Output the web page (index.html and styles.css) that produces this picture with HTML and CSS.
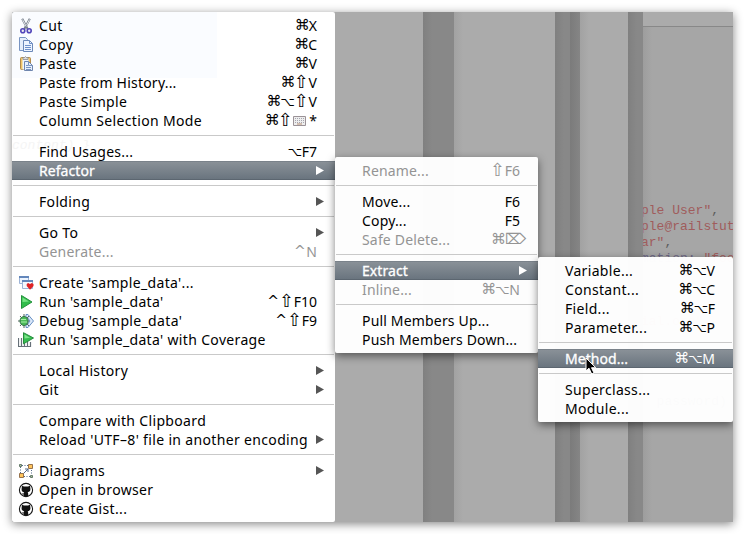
FILE: index.html
```html
<!DOCTYPE html>
<html lang="en">
<head>
<meta charset="utf-8">
<title>Editor context menu</title>
<link rel="stylesheet" href="styles.css">
</head>
<body>
<svg class="defs" width="0" height="0" aria-hidden="true">
  <symbol id="play" viewBox="0 0 16 16"><path d="M3.5 1.5 14 8 3.5 14.5Z" fill="#32bd4c" stroke="#23923c"/><path d="M4.5 3.5 11 7.6 4.5 8Z" fill="#78e486"/></symbol>
  <symbol id="cat" viewBox="0 0 16 16"><circle cx="8" cy="8" r="6.6" fill="#fff" stroke="#161616" stroke-width="1.1"/><path d="M4 3.7 6 4.6h4l2-.9.4 3.1c.2 2.1-.9 3.2-2.7 3.5l.5 1.1V14.4H5.8V12.6C4.5 12.7 4 12.2 3.6 11.2l1.7.6.9-1.5C4.3 10 3.4 9 3.6 6.8Z" fill="#111"/></symbol>
</svg>
<main class="window">
  <div class="panes" aria-hidden="true">
    <i class="pane light first"></i><i class="pane dark wide"></i><i class="pane light second"></i><i class="pane dark narrow"></i><i class="pane darker"></i><i class="pane light third"></i><i class="pane dark narrow"></i>
    <div class="code">
      <pre class="literals"><span>ple User"</span><b>,</b>
<span>ple@railstut</span>
<span>ar"</span><b>,</b>
<em>mation: </em><span>"foo</span>



<span>ial.org"</span>




<b>  password)</b></pre>
    </div>
  </div>

  <nav class="menu main-menu">
    <pre class="ghost">content) }</pre>
    <div class="row"><svg class="icon" viewBox="0 0 16 16"><path d="M4.2.8 9.7 11M11.8.8 6.3 11" stroke="#78818d" stroke-width="2.1" fill="none"/><path d="m4.5 1.5 3.7 7M11.5 1.5 8.7 7" stroke="#fff" stroke-width=".8"/><circle cx="4.8" cy="12.7" r="2" fill="#eee" stroke="#5145ba" stroke-width="1.6"/><circle cx="11.2" cy="12.7" r="2" fill="#eee" stroke="#5145ba" stroke-width="1.6"/></svg><span class="label">Cut</span><kbd><i>⌘</i>X</kbd></div>
    <div class="row"><svg class="icon" viewBox="0 0 16 16"><path d="M1.5.5h6l2 2v11h-8Z" fill="#e5eefb" stroke="#7894c2"/><path d="M5.5 3.5h6l3 3v8h-9Z" fill="#edf4ff" stroke="#6c89b9"/><path d="M11.5 3.5v3h3M7 8.5h6m-6 2h6m-6 2h6" stroke="#6f91ca" fill="none"/></svg><span class="label">Copy</span><kbd><i>⌘</i>C</kbd></div>
    <div class="row"><svg class="icon" viewBox="0 0 16 16"><rect x="2.5" y="1.5" width="10" height="12" rx="1" fill="#f2c566" stroke="#b28b4d"/><path d="M4.5 2.5h6v11h-6Z" fill="#eef4fd"/><path d="M5 3.5v-2h1.5l1-1 1 1H10v2Z" fill="#ddd" stroke="#8a8b90" stroke-width=".8"/><path d="M6.5 5.5h4l4 4v5h-8Z" fill="#e8f0fc" stroke="#6f86ae"/><path d="M10.5 5.5v4h4M8 11.5h5m-5-2h2m-2 4h5" stroke="#7893c0" fill="none"/></svg><span class="label">Paste</span><kbd><i>⌘</i>V</kbd></div>
    <div class="row"><span class="label tight">Paste from History...</span><kbd><i>⌘</i><i class="shift">⇧</i>V</kbd></div>
    <div class="row"><span class="label">Paste Simple</span><kbd><i>⌘</i><i class="option">⌥</i><i class="shift">⇧</i>V</kbd></div>
    <div class="row"><span class="label">Column Selection Mode</span><kbd><i>⌘</i><i class="shift">⇧</i><svg class="keyboard" viewBox="0 0 13 10"><path d="M.5.5h12v9H.5Z" fill="#eee" stroke="#9b9297"/><path d="M2 2.5h9m-9 2h9m-9 2h9" stroke="#a5a5af" stroke-dasharray="1 1"/><path d="M4 8h5" stroke="#b58d72"/></svg> *</kbd></div>
    <hr>
    <div class="row"><span class="label tight">Find Usages...</span><kbd><i class="option">⌥</i>F7</kbd></div>
    <div class="row selected"><span class="label">Refactor</span><span class="arrow"></span></div>
    <hr>
    <div class="row"><span class="label">Folding</span><span class="arrow"></span></div>
    <hr>
    <div class="row"><span class="label">Go To</span><span class="arrow"></span></div>
    <div class="row disabled"><span class="label tight">Generate...</span><kbd><i class="control">^</i>N</kbd></div>
    <hr>
    <div class="row"><svg class="icon" viewBox="0 0 16 16"><path d="M1.5 1.5h9v7h-9Z" fill="#edf5ff" stroke="#9db3d6"/><path d="M1 2h10" stroke="#6387bb" stroke-width="2"/><path d="M4.5 5.5h10v8h-10Z" fill="#f4f8fe" stroke="#9db3d6"/><path d="M4 6h11" stroke="#6387bb" stroke-width="2"/><path d="M12 14.7 8.7 11V9l1.4-1 1.9 1 1.8-1L15.5 9v2Z" fill="#df2225"/></svg><span class="label">Create 'sample_data'...</span></div>
    <div class="row"><svg class="icon"><use href="#play"/></svg><span class="label">Run 'sample_data'</span><kbd><i class="control">^</i><i class="shift">⇧</i>F10</kbd></div>
    <div class="row"><svg class="icon debug" viewBox="0 0 16 16"><path d="M8 1.5h2l5.5 6.5L10 14.5H8Z" fill="#dce9fa" stroke="#668fc3"/><path d="m9 4 3 4-3 4" fill="none" stroke="#668fc3"/><path d="m2 3 9 10M11 3 2 13M0 8h11M6 1v14" stroke="#4d6259"/><ellipse cx="6" cy="8" rx="4" ry="4.5" fill="#4bbb57" stroke="#34724a"/><path d="M3 6.5h5M3 9h6" stroke="#a7edaa"/></svg><span class="label">Debug 'sample_data'</span><kbd><i class="control">^</i><i class="shift">⇧</i>F9</kbd></div>
    <div class="row"><svg class="icon" viewBox="0 0 16 16"><path d="M.5 6v8.5h12V10M3.5 6v8m3-8v8m3-7v7" fill="none" stroke="#667078" stroke-width="1.2"/><path d="M5.5.7 15.5 6l-10 5.8Z" fill="#37bd50" stroke="#268d3d"/><path d="m6.5 2.5 5.7 3.2-5.7.8Z" fill="#7ee38b"/></svg><span class="label">Run 'sample_data' with Coverage</span></div>
    <hr>
    <div class="row"><span class="label">Local History</span><span class="arrow"></span></div>
    <div class="row"><span class="label">Git</span><span class="arrow"></span></div>
    <hr>
    <div class="row"><span class="label">Compare with Clipboard</span></div>
    <div class="row"><span class="label">Reload 'UTF–8' file in another encoding</span><span class="arrow"></span></div>
    <hr>
    <div class="row"><svg class="icon" viewBox="0 0 16 16"><path d="M4 2.5h8M2.5 4v6M13.5 7v6M6 13.5h7" stroke="#53698b" stroke-dasharray="1 1.5"/><path d="m5 11 5-5M7 6h3v3" fill="none" stroke="#53698b"/><path d="M10.5 1.5h4v4h-4ZM1.5 10.5h4v4h-4Z" fill="#ffc45c" stroke="#97734c"/><path d="M1.5 1.5h2v2h-2ZM12.5 12.5h2v2h-2Z" fill="#aac29b" stroke="#667b6b"/></svg><span class="label">Diagrams</span><span class="arrow"></span></div>
    <div class="row"><svg class="icon"><use href="#cat"/></svg><span class="label">Open in browser</span></div>
    <div class="row"><svg class="icon"><use href="#cat"/></svg><span class="label">Create Gist...</span></div>
  </nav>

  <nav class="menu refactor-menu">
    <div class="row disabled"><span class="label">Rename...</span><kbd><i class="shift">⇧</i>F6</kbd></div>
    <hr>
    <div class="row"><span class="label">Move...</span><kbd>F6</kbd></div>
    <div class="row"><span class="label">Copy...</span><kbd>F5</kbd></div>
    <div class="row disabled"><span class="label">Safe Delete...</span><kbd><i>⌘</i><i class="delete">⌦</i></kbd></div>
    <hr>
    <div class="row selected"><span class="label">Extract</span><span class="arrow"></span></div>
    <div class="row disabled"><span class="label">Inline...</span><kbd><i>⌘</i><i class="option">⌥</i>N</kbd></div>
    <hr>
    <div class="row"><span class="label">Pull Members Up...</span></div>
    <div class="row"><span class="label">Push Members Down...</span></div>
  </nav>

  <nav class="menu extract-menu">
    <div class="row"><span class="label">Variable...</span><kbd><i>⌘</i><i class="option">⌥</i>V</kbd></div>
    <div class="row"><span class="label">Constant...</span><kbd><i>⌘</i><i class="option">⌥</i>C</kbd></div>
    <div class="row"><span class="label">Field...</span><kbd><i>⌘</i><i class="option">⌥</i>F</kbd></div>
    <div class="row"><span class="label">Parameter...</span><kbd><i>⌘</i><i class="option">⌥</i>P</kbd></div>
    <hr>
    <div class="row selected"><span class="label">Method...</span><kbd><i>⌘</i><i class="option">⌥</i>M</kbd></div>
    <hr>
    <div class="row"><span class="label">Superclass...</span></div>
    <div class="row"><span class="label">Module...</span></div>
  </nav>
  <svg class="cursor" viewBox="0 0 12 18"><path d="M1 1v13l3-2.8L6.7 17l2.3-1-2.5-5.3h4.3Z" fill="#000" stroke="#fff"/></svg>
</main>
</body>
</html>
```
FILE: styles.css
```css
* { box-sizing: border-box; }
body { margin: 0; padding: 12px; background: #fff; font: 14px/19px "Noto Sans", "DejaVu Sans", sans-serif; color: #000; }
.defs { position: absolute; }
.window { position: relative; width: 721px; height: 510px; box-shadow: 0 2px 9px rgba(0,0,0,.48); }
.panes { display: flex; height: 510px; background: #ababab; overflow: hidden; }
.pane { flex: none; background: linear-gradient(90deg, #a2a2a2, #ababab 9px); }
.pane.first { width: 411px; background: #ababab; }
.pane.second { width: 101px; }
.pane.third { width: 48px; }
.pane.dark { background: linear-gradient(90deg, #808080, #888 9px); }
.pane.wide { width: 31px; }
.pane.narrow { width: 15px; }
.pane.darker { width: 10px; background: linear-gradient(90deg, #7b7b7b, #858585); }
.code { flex: 1; overflow: hidden; background: linear-gradient(#ababab 14px, #888 14px 15px, transparent 15px), linear-gradient(90deg, #9d9d9d, #a6a6a6 9px); }
.code pre { margin: 191px 0 0 -2px; font: 13px/15.9px "Liberation Mono", monospace; color: #a05c5c; }
.code b { font-weight: 400; color: #5c5c5c; }
.code em { font-style: normal; color: #6e6886; }
.menu { position: absolute; padding: 4px 0; background: rgba(255,255,255,.975); border-radius: 2px; box-shadow: 0 3px 9px rgba(0,0,0,.5); }
.main-menu { left: 0; top: 0; width: 323px; background: linear-gradient(#fafcff, #fafcff) 0 0 / 205px 66px no-repeat #fff; box-shadow: none; }
.refactor-menu { left: 323px; top: 145px; width: 203px; }
.extract-menu { left: 526px; top: 245px; width: 195px; clip-path: inset(-12px 0 -16px -12px); }
.ghost { position: absolute; left: 0; top: 124px; margin: 0; font: italic 13px/19px "Liberation Mono", monospace; color: #f5f5f5; }
.row { position: relative; display: flex; justify-content: space-between; height: 19px; padding: 0 18px 0 27px; }
.label, kbd { white-space: nowrap; }
.label { letter-spacing: .34px; }
.label.tight { letter-spacing: .22px; }
.refactor-menu .label { letter-spacing: .17px; }
.extract-menu .label { letter-spacing: .32px; }
.menu .selected .label { letter-spacing: .06px; -webkit-text-stroke: .3px currentColor; }
kbd { display: flex; font: inherit; white-space: pre; }
kbd i { width: 14px; font: 15px/19px "DejaVu Sans", sans-serif; text-align: center; }
kbd .shift { display: flex; justify-content: center; font-size: 18px; line-height: 18px; }
kbd .option { font-size: 12.5px; }
kbd .control { width: 13px; font-size: 14px; }
kbd .delete { width: 15px; }
.icon { position: absolute; left: 6px; top: 2px; width: 16px; height: 16px; }
.keyboard { width: 13px; height: 10px; margin-top: 5px; }
hr { height: 1px; margin: 5px 1px 6px; border: 0; background: #c9c9c9; }
.selected { color: #fff; background: linear-gradient(#8b9299, #68737d); box-shadow: inset 0 1px #7a828a, inset 0 -1px #5c6670; }
.disabled { color: #949494; }
.arrow { margin: 5px -7px 0 0; width: 8px; height: 9px; background: #555; clip-path: polygon(0 0, 100% 50%, 0 100%); }
.selected .arrow { background: #fff; }
.cursor { position: absolute; left: 573px; top: 345px; width: 12px; height: 18px; }
```
